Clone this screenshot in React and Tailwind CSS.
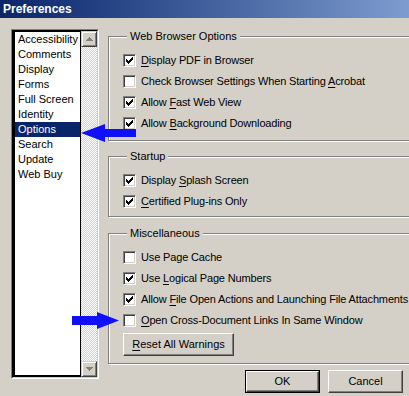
const font = { fontFamily: '"Liberation Sans", Arial, sans-serif' };

const categories = [
  "Accessibility",
  "Comments",
  "Display",
  "Forms",
  "Full Screen",
  "Identity",
  "Options",
  "Search",
  "Update",
  "Web Buy",
];

const groups = [
  {
    title: "Web Browser Options",
    h: "h-[105px]",
    rows: [
      [true, "", "D", "isplay PDF in Browser"],
      [false, "Check Browser Settings When Starting ", "A", "crobat"],
      [true, "Allow ", "F", "ast Web View"],
      [true, "Allow ", "B", "ackground Downloading"],
    ],
  },
  {
    title: "Startup",
    h: "h-[61px]",
    rows: [
      [true, "Display ", "S", "plash Screen"],
      [true, "", "C", "ertified Plug-ins Only"],
    ],
  },
  {
    title: "Miscellaneous",
    h: "h-[131px]",
    rows: [
      [false, "Use Page Cache", "", ""],
      [true, "Use ", "L", "ogical Page Numbers"],
      [true, "Allow ", "F", "ile Open Actions and Launching File Attachments"],
      [false, "", "O", "pen Cross-Document Links In Same Window"],
    ],
    reset: true,
  },
];

function Check() {
  return (
    <svg width="7" height="7" viewBox="0 0 7 7" shapeRendering="crispEdges">
      <rect x="6" y="0" width="1" height="1" />
      <rect x="5" y="1" width="2" height="1" />
      <rect x="0" y="2" width="1" height="1" />
      <rect x="4" y="2" width="3" height="1" />
      <rect x="0" y="3" width="2" height="1" />
      <rect x="3" y="3" width="3" height="1" />
      <rect x="0" y="4" width="5" height="1" />
      <rect x="1" y="5" width="3" height="1" />
      <rect x="2" y="6" width="1" height="1" />
    </svg>
  );
}

function Checkbox({ checked }) {
  return (
    <div className="flex h-[13px] w-[13px] shrink-0 items-center justify-center border border-t-[#808080] border-l-[#808080] border-r-white border-b-white bg-white shadow-[inset_1px_1px_0_#404040,inset_-1px_-1px_0_#d4d0c8]">
      {checked && <Check />}
    </div>
  );
}

function Button({ children, def, w }) {
  const face = (
    <div className="flex h-full w-full items-center justify-center border border-t-white border-l-white border-r-[#404040] border-b-[#404040] bg-[#d4d0c8] shadow-[inset_-1px_-1px_0_#808080]">
      {children}
    </div>
  );
  if (def) {
    return <div className={`${w} h-[23px] border border-black`}>{face}</div>;
  }
  return <div className={`${w} h-[23px]`}>{face}</div>;
}

function ScrollBtn({ down }) {
  return (
    <div className="flex h-[16px] w-[16px] items-center justify-center border border-t-[#d4d0c8] border-l-[#d4d0c8] border-r-[#404040] border-b-[#404040] bg-[#d4d0c8] shadow-[inset_1px_1px_0_#fff,inset_-1px_-1px_0_#808080]">
      <svg width="7" height="4" viewBox="0 0 7 4" shapeRendering="crispEdges">
        {down ? (
          <polygon points="0,0 7,0 3.5,4" fill="#808080" />
        ) : (
          <polygon points="3.5,0 7,4 0,4" fill="#808080" />
        )}
      </svg>
    </div>
  );
}

function Group({ g }) {
  return (
    <div
      className={`relative ${g.h} w-[320px] border border-[#808080] pl-[14px] pt-[13px] shadow-[1px_1px_0_#fff,inset_1px_1px_0_#fff]`}
    >
      <span className="absolute -top-[8px] left-[18px] bg-[#d4d0c8] px-[3px] leading-[14px]">
        {g.title}
      </span>
      {g.rows.map(([on, pre, key, post], i) => (
        <div key={i} className="flex h-[21px] items-center gap-[5px]">
          <Checkbox checked={on} />
          <span className="whitespace-nowrap tracking-[-0.15px]">
            {pre}
            {key && <u className="underline-offset-[2px]">{key}</u>}
            {post}
          </span>
        </div>
      ))}
      {g.reset && (
        <div className="mt-[2px]">
          <Button w="w-[111px]">
            <span>
              <u className="underline-offset-[2px]">R</u>eset All Warnings
            </span>
          </Button>
        </div>
      )}
    </div>
  );
}

export default function App() {
  return (
    <div
      className="relative h-[396px] w-[409px] overflow-hidden bg-[#d4d0c8] text-[11px] text-black"
      style={font}
    >
      <div className="flex h-[18px] items-center bg-gradient-to-r from-[#0a246a] to-[#7e9ccf] pl-[3px] text-[12px] font-bold text-white">
        Preferences
      </div>

      <div className="flex items-start pl-[11px] pt-[11px]">
        {/* category list */}
        <div className="h-[350px] w-[88px] shrink-0 border border-t-[#808080] border-l-[#808080] border-r-white border-b-white">
          <div className="flex h-full border border-t-black border-l-black border-r-[#d4d0c8] border-b-[#d4d0c8]">
            <div className="flex-1 border border-black border-b-2 border-l-2 bg-white">
              {categories.map((c) => (
                <div
                  key={c}
                  className={`flex h-[15px] items-center whitespace-nowrap pl-[3px] ${
                    c === "Options" ? "bg-[#0a246a] text-white" : ""
                  }`}
                >
                  {c}
                </div>
              ))}
            </div>
            <div className="flex w-[16px] flex-col bg-[repeating-conic-gradient(#d4d0c8_0%_25%,#ffffff_0%_50%)] bg-[length:2px_2px]">
              <ScrollBtn />
              <div className="flex-1" />
              <ScrollBtn down />
            </div>
          </div>
        </div>

        {/* option groups */}
        <div className="ml-[9px] mt-[7px] flex flex-col">
          <Group g={groups[0]} />
          <div className="mt-[15px]">
            <Group g={groups[1]} />
          </div>
          <div className="mt-[16px]">
            <Group g={groups[2]} />
          </div>
          <div className="ml-[137px] mt-[6px] flex gap-[8px]">
            <Button def w="w-[75px]">
              OK
            </Button>
            <Button w="w-[75px]">Cancel</Button>
          </div>
        </div>
      </div>

      <svg
        className="pointer-events-none absolute left-0 top-0"
        width="409"
        height="396"
        viewBox="0 0 409 396"
      >
        <polygon
          points="81,133 105,124 105,129 136,129 136,137 105,137 105,142"
          fill="#1010f8"
        />
        <polygon
          points="72,316 97,316 97,312 119,320.5 97,329 97,325 72,325"
          fill="#1010f8"
        />
      </svg>
    </div>
  );
}
